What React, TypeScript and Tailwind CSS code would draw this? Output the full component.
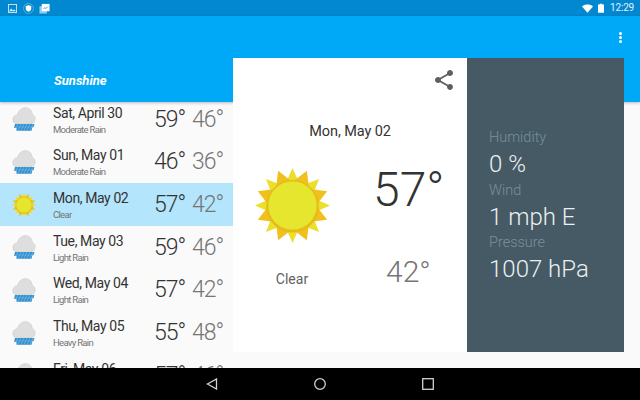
import React from 'react';

const days = [
  { date: 'Sat, April 30', desc: 'Moderate Rain', high: '59°', low: '46°' },
  { date: 'Sun, May 01', desc: 'Moderate Rain', high: '46°', low: '36°' },
  { date: 'Mon, May 02', desc: 'Clear', high: '57°', low: '42°', selected: true },
  { date: 'Tue, May 03', desc: 'Light Rain', high: '59°', low: '46°' },
  { date: 'Wed, May 04', desc: 'Light Rain', high: '57°', low: '42°' },
  { date: 'Thu, May 05', desc: 'Heavy Rain', high: '55°', low: '48°' },
  { date: 'Fri, May 06', desc: 'Light Rain', high: '57°', low: '46°' },
];

const RainIcon = () => (
  <svg viewBox="0 0 24 24" className="w-6 h-6 shrink-0">
    <path d="M5 16.8 C1.5 16.8 0.6 14 1 11.5 C1.4 9 3.5 8 5.5 8 C6.5 3 10 0.5 14 0.7 C18 1 20 4 20.3 7.5 C22.5 8.5 23.3 10.5 23 12.5 C22.7 15 21 16.8 19 16.8 Z" fill="#dedede" stroke="#c8c8c8" strokeWidth="0.6" />
    <path d="M3 17 H22.5 L21.5 20 H20.5 L19.5 23.8 H4.5 L4.5 21 H2 Z" fill="#2f8fd0" />
    <path d="M6 17 L3.5 21 M9 17 L6 23.5 M12 17 L9 23.5 M15 17 L12 23.5 M18 17 L15 23.5 M21 17 L18 23.5" stroke="#8cc6ea" strokeWidth="0.6" />
    <path d="M2 20 H22" stroke="#8cc6ea" strokeWidth="0.4" />
  </svg>
);

const SunIcon = ({ className }: { className: string }) => {
  const big: string[] = [];
  const small: string[] = [];
  const pt = (r: number, deg: number) => {
    const a = (deg * Math.PI) / 180;
    return `${(50 + r * Math.cos(a)).toFixed(1)},${(50 + r * Math.sin(a)).toFixed(1)}`;
  };
  for (let i = 0; i < 8; i++) {
    const d = i * 45;
    small.push(`${pt(33, d - 14)} ${pt(50, d)} ${pt(33, d + 14)}`);
    const e = d + 22.5;
    big.push(`${pt(32, e - 21)} ${pt(50, e)} ${pt(32, e + 21)}`);
  }
  return (
    <svg viewBox="0 0 100 100" className={className}>
      {small.map((p) => (
        <polygon key={p} points={p} fill="#ecdf2c" />
      ))}
      {big.map((p) => (
        <polygon key={p} points={p} fill="#f0c11d" />
      ))}
      <circle cx="50" cy="51" r="35" fill="#e9b916" />
      <circle cx="50" cy="50" r="32.5" fill="#e6e62e" stroke="#dcc52a" strokeWidth="0.6" />
    </svg>
  );
};

const ShareIcon = () => (
  <svg viewBox="0 0 24 24" className="w-6 h-6" fill="#5f5f5f">
    <path d="M18 16.08c-.76 0-1.44.3-1.96.77L8.91 12.7c.05-.23.09-.46.09-.7s-.04-.47-.09-.7l7.05-4.11c.54.5 1.25.81 2.04.81 1.66 0 3-1.34 3-3s-1.34-3-3-3-3 1.34-3 3c0 .24.04.47.09.7L8.04 9.81C7.5 9.31 6.79 9 6 9c-1.66 0-3 1.34-3 3s1.34 3 3 3c.79 0 1.5-.31 2.04-.81l7.12 4.16c-.05.21-.08.43-.08.65 0 1.61 1.31 2.92 2.92 2.92s2.92-1.31 2.92-2.92-1.31-2.92-2.92-2.92z" />
  </svg>
);

const StatusBar = () => (
  <div className="h-4 bg-[#0288d1] flex items-center pl-2 pr-[6px] gap-[5px] shrink-0">
    <svg viewBox="0 0 10 10" className="w-[9px] h-[9px] mr-[1px]" fill="none" stroke="#cfe8f7" strokeWidth="1">
      <rect x="0.5" y="0.5" width="9" height="9" />
      <path d="M1 8 L3.5 5 L5.5 7 L7 6 L9 8 Z" fill="#cfe8f7" stroke="none" />
    </svg>
    <svg viewBox="0 0 12 12" className="w-[11px] h-[11px]">
      <circle cx="6" cy="6" r="5.4" fill="none" stroke="#5fb6e6" strokeWidth="0.9" />
      <path d="M3 3.2 L6 2.5 L9 3.2 V6 C9 8 7.5 9 6 9.6 C4.5 9 3 8 3 6 Z" fill="#fff" />
    </svg>
    <svg viewBox="0 0 12 12" className="w-[11px] h-[11px]">
      <rect x="0.5" y="3.5" width="8" height="8" fill="#8fcdf0" />
      <rect x="3" y="1" width="8.5" height="8" fill="#fff" />
      <path d="M5 6.5 L6.5 5 L7.5 6 L9.5 4" stroke="#0288d1" strokeWidth="0.8" fill="none" />
    </svg>
    <div className="ml-auto flex items-center text-[#e3f2fb] text-[10px] tracking-[-0.2px] leading-none">
      <svg viewBox="0 0 12 9" className="w-[11px] h-[9px]" fill="#fff">
        <path d="M0 2.2 C3.3 -0.6 8.7 -0.6 12 2.2 L6 9 Z" />
      </svg>
      <svg viewBox="0 0 7 11" className="w-[6px] h-[10px] ml-[5px]" fill="#fff">
        <path d="M2 0.5 H5 V1.5 H7 V11 H0 V1.5 H2 Z" />
      </svg>
      <span className="ml-[6px]">12:29</span>
    </div>
  </div>
);

const ForecastRow = ({ date, desc, high, low, selected }: (typeof days)[number]) => (
  <div className={`h-[42.67px] shrink-0 flex items-center pl-3 pr-[11px] ${selected ? 'bg-[#b3e5fc]' : ''}`}>
    {selected ? <SunIcon className="w-6 h-6 shrink-0" /> : <RainIcon />}
    <div className="flex-1 pl-[17px] min-w-0 pt-[2px]">
      <div className="text-[14px] tracking-[-0.4px] leading-[19px] text-[#333]">{date}</div>
      <div className="text-[9.5px] tracking-[-0.7px] leading-[14px] text-[#757575]">{desc}</div>
    </div>
    <div className="text-[23px] tracking-[-1px] font-light text-[#333] leading-none w-[38px]">{high}</div>
    <div className="text-[23px] tracking-[-1px] font-light text-[#757575] leading-none w-[30px]">{low}</div>
  </div>
);

const Stat = ({ label, value }: { label: string; value: string }) => (
  <div>
    <div className="text-[14.5px] leading-[20px] font-light text-[#78909c]">{label}</div>
    <div className="text-[24px] leading-[32.5px] font-light text-[#eceff1]">{value}</div>
  </div>
);

export default function App() {
  return (
    <div className="w-[640px] h-[400px] flex flex-col overflow-hidden bg-[#fafafa] font-['Roboto',sans-serif]">
      <StatusBar />
      <div className="relative flex-1 flex flex-col min-h-0">
        <div className="h-[86px] bg-[#00a9f8] shrink-0 shadow-[0_1px_3px_rgba(0,0,0,0.25)] z-10 relative">
          <div className="absolute right-[18px] top-[16px] flex flex-col gap-[1px]">
            <span className="w-[3px] h-[3px] rounded-full bg-white" />
            <span className="w-[3px] h-[3px] rounded-full bg-white" />
            <span className="w-[3px] h-[3px] rounded-full bg-white" />
          </div>
          <div className="absolute left-[54px] top-[56px] text-[13px] leading-[18px] font-bold italic text-white">Sunshine</div>
        </div>
        <div className="flex-1 min-h-0 w-[233px] overflow-hidden flex flex-col -mt-[4px]">
          {days.map((d) => (
            <ForecastRow key={d.date} {...d} />
          ))}
        </div>

        {/* detail card sits over the toolbar */}
        <div className="absolute z-20 left-[233px] top-[42px] w-[391px] h-[294px] flex">
          <div className="w-[234px] bg-white relative flex flex-col">
            <div className="absolute right-[11px] top-[10px]">
              <ShareIcon />
            </div>
            <div className="text-center text-[14.5px] tracking-[-0.1px] leading-[18px] text-[#333] pt-[65px]">Mon, May 02</div>
            <div className="flex">
              <div className="w-[118px] flex flex-col items-center pt-[27px]">
                <SunIcon className="w-[75px] h-[75px]" />
                <div className="mt-[27px] text-[14px] leading-[18px] text-[#616161]">Clear</div>
              </div>
              <div className="pl-[22px] pt-[25px]">
                <div className="text-[48px] leading-[48px] font-light text-[#333]">57°</div>
                <div className="mt-[43px] ml-[13px] text-[30px] leading-[30px] font-light text-[#757575]">42°</div>
              </div>
            </div>
          </div>
          <div className="w-[157px] bg-[#455a64] pl-[22px] pt-[70px]">
            <Stat label="Humidity" value="0 %" />
            <Stat label="Wind" value="1 mph E" />
            <Stat label="Pressure" value="1007 hPa" />
          </div>
        </div>
      </div>
      <div className="h-8 bg-black shrink-0 flex items-center justify-center gap-[96px] z-30 relative">
        <svg viewBox="0 0 12 12" className="w-3 h-3" fill="none" stroke="#d0d0d0" strokeWidth="1.3">
          <path d="M10.5 1 V11 L1.5 6 Z" />
        </svg>
        <svg viewBox="0 0 12 12" className="w-3 h-3" fill="none" stroke="#d0d0d0" strokeWidth="1.3">
          <circle cx="6" cy="6" r="5.3" />
        </svg>
        <svg viewBox="0 0 12 12" className="w-3 h-3" fill="none" stroke="#d0d0d0" strokeWidth="1.3">
          <rect x="0.7" y="0.7" width="10.6" height="10.6" />
        </svg>
      </div>
    </div>
  );
}
